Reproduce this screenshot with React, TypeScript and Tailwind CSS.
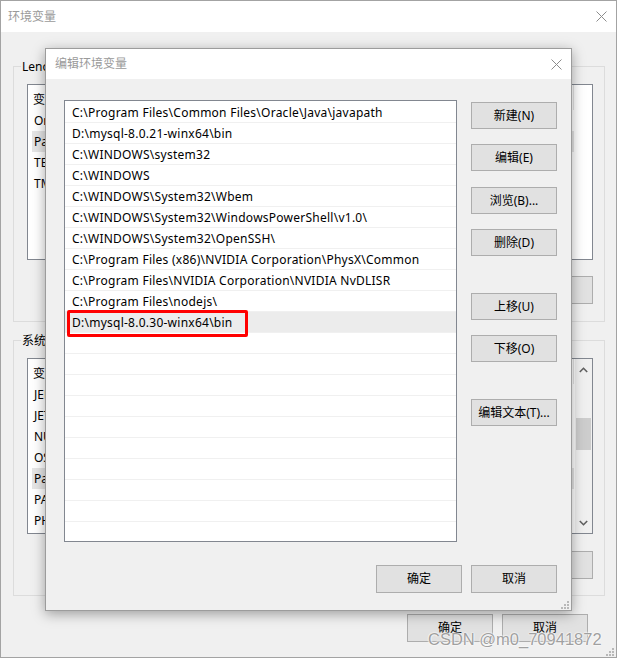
import React from "react";

const paths = [
  "C:\\Program Files\\Common Files\\Oracle\\Java\\javapath",
  "D:\\mysql-8.0.21-winx64\\bin",
  "C:\\WINDOWS\\system32",
  "C:\\WINDOWS",
  "C:\\WINDOWS\\System32\\Wbem",
  "C:\\WINDOWS\\System32\\WindowsPowerShell\\v1.0\\",
  "C:\\WINDOWS\\System32\\OpenSSH\\",
  "C:\\Program Files (x86)\\NVIDIA Corporation\\PhysX\\Common",
  "C:\\Program Files\\NVIDIA Corporation\\NVIDIA NvDLISR",
  "C:\\Program Files\\nodejs\\",
  "D:\\mysql-8.0.30-winx64\\bin",
];

const userVars = ["OneDrive", "Path", "TEMP", "TMP"];
const sysVars = ["JENKINS_HOME", "JETTY_HOME", "NUMBER_OF_PROCESSORS", "OS", "Path", "PATHEXT", "PHP_HOME"];

function CloseX() {
  return (
    <svg width="11" height="11" viewBox="0 0 11 11" className="block">
      <path d="M0.5 0.5 L10.5 10.5 M10.5 0.5 L0.5 10.5" stroke="#8c8c8c" strokeWidth="1" fill="none" />
    </svg>
  );
}

function Grip() {
  return (
    <svg width="8" height="8" viewBox="0 0 8 8" className="block">
      <rect x="6" y="0" width="2" height="2" fill="#b8b8b8" />
      <rect x="3" y="3" width="2" height="2" fill="#b8b8b8" />
      <rect x="6" y="3" width="2" height="2" fill="#b8b8b8" />
      <rect x="0" y="6" width="2" height="2" fill="#b8b8b8" />
      <rect x="3" y="6" width="2" height="2" fill="#b8b8b8" />
      <rect x="6" y="6" width="2" height="2" fill="#b8b8b8" />
    </svg>
  );
}

function Btn({ children, tall = false }: { children: React.ReactNode; tall?: boolean }) {
  return (
    <div
      className={
        "flex items-center justify-center w-[86px] bg-[#e1e1e1] border border-[#adadad] text-[12px] text-black shrink-0 " +
        (tall ? "h-[28px]" : "h-[27px]")
      }
    >
      {children}
    </div>
  );
}

function VarList({ rows, selected, scroll }: { rows: string[]; selected: number; scroll?: boolean }) {
  return (
    <div className="h-[176px] border border-[#828790] bg-white flex overflow-hidden">
      <div className="flex-1 flex flex-col">
        <div className="h-[25px] pt-[4px] flex items-center ml-[4px] w-[542px] border-r border-[#e5e5e5] shrink-0">
          <span className="w-[160px] pl-[1px]">变量</span>
        </div>
        {rows.map((k, i) => (
          <div
            key={k}
            className={
              "h-[21px] flex items-center ml-[4px] w-[542px] shrink-0 " + (i === selected ? "bg-[#e5e5e5]" : "")
            }
          >
            <span className="w-[160px] pl-[2px] whitespace-nowrap overflow-hidden">{k}</span>
          </div>
        ))}
      </div>
      {scroll && (
        <div className="w-[17px] bg-[#f0f0f0] flex flex-col items-center shrink-0">
          <div className="h-[17px] w-full flex items-center justify-center mt-[2px]">
            <svg width="9" height="6" viewBox="0 0 9 6">
              <path d="M0.8 5 L4.5 1.3 L8.2 5" stroke="#606060" strokeWidth="1.6" fill="none" />
            </svg>
          </div>
          <div className="mt-[40px] h-[32px] w-[15px] bg-[#cdcdcd]" />
          <div className="flex-1" />
          <div className="h-[17px] w-full flex items-center justify-center mb-[2px]">
            <svg width="9" height="6" viewBox="0 0 9 6">
              <path d="M0.8 1 L4.5 4.7 L8.2 1" stroke="#606060" strokeWidth="1.6" fill="none" />
            </svg>
          </div>
        </div>
      )}
    </div>
  );
}

export default function App() {
  const emptyRows = Array.from({ length: 21 - paths.length });
  return (
    <div className="relative w-[618px] h-[659px] bg-white overflow-hidden text-[12px] text-black font-['Noto_Sans','Noto_Sans_CJK_SC',sans-serif]">
      {/* Outer window: 环境变量 */}
      <div className="w-[617px] h-[658px] border border-[#a3a3a3] bg-[#f0f0f0] flex flex-col">
        <div className="h-[31px] bg-white flex items-center justify-between pl-[7px] pr-[9px] shrink-0">
          <span className="text-[#9a9a9a]">环境变量</span>
          <CloseX />
        </div>
        <div className="flex flex-col pl-[12px] pr-[11px]">
          <fieldset className="mt-[26px] border border-[#dcdcdc]">
            <legend className="ml-[7px] px-[1px] leading-[17px]">Lenovo 的用户变量(U)</legend>
            <div className="pl-[13px] pr-[11px] pt-[9px] pb-[17px] flex flex-col">
              <VarList rows={userVars} selected={1} />
              <div className="mt-[16px] flex justify-end gap-[9px]">
                <Btn tall>新建(N)...</Btn>
                <Btn tall>编辑(E)...</Btn>
                <Btn tall>删除(D)</Btn>
              </div>
            </div>
          </fieldset>
          <fieldset className="mt-[10px] border border-[#dcdcdc]">
            <legend className="ml-[7px] px-[1px] leading-[17px]">系统变量(S)</legend>
            <div className="pl-[13px] pr-[11px] pt-[9px] pb-[16px] flex flex-col">
              <VarList rows={sysVars} selected={4} scroll />
              <div className="mt-[17px] flex justify-end gap-[9px]">
                <Btn tall>新建(W)...</Btn>
                <Btn tall>编辑(I)...</Btn>
                <Btn tall>删除(L)</Btn>
              </div>
            </div>
          </fieldset>
          <div className="mt-[18px] flex justify-end gap-[9px] pr-[17px]">
            <Btn tall>确定</Btn>
            <Btn tall>取消</Btn>
          </div>
          <div className="mt-[6px] flex justify-end mr-[-9px]">
            <Grip />
          </div>
        </div>
      </div>

      {/* Dialog: 编辑环境变量 */}
      <div className="absolute left-[45px] top-[48px] w-[527px] h-[563px] border border-[#9c9c9c] bg-[#f0f0f0] shadow-[0_3px_12px_rgba(0,0,0,0.35)] flex flex-col overflow-hidden">
        <div className="h-[30px] bg-white flex items-center justify-between pl-[9px] pr-[9px] shrink-0">
          <span className="text-[#9a9a9a]">编辑环境变量</span>
          <CloseX />
        </div>
        <div className="flex pl-[18px] pt-[21px]">
          <div className="relative w-[393px] h-[442px] border border-[#828790] bg-white pt-[1px] overflow-hidden shrink-0">
            {paths.map((p, i) => (
              <div
                key={p}
                className={
                  "h-[21px] flex items-center pl-[7px] pt-[1px] border-b border-[#f0f0f0] whitespace-nowrap tracking-[0.25px] " +
                  (i === paths.length - 1 ? "bg-[#ececec]" : "")
                }
              >
                {p}
              </div>
            ))}
            {emptyRows.map((_, i) => (
              <div key={"e" + i} className="h-[21px] border-b border-[#f0f0f0]" />
            ))}
            <div className="absolute left-[2px] top-[209px] w-[181px] h-[27px] border-[3px] border-[#ff0000] rounded-[2px]" />
          </div>
          <div className="ml-[14px] flex flex-col pt-[2px]">
            <Btn>新建(N)</Btn>
            <div className="mt-[15px]"><Btn>编辑(E)</Btn></div>
            <div className="mt-[16px]"><Btn>浏览(B)...</Btn></div>
            <div className="mt-[15px]"><Btn>删除(D)</Btn></div>
            <div className="mt-[37px]"><Btn>上移(U)</Btn></div>
            <div className="mt-[15px]"><Btn>下移(O)</Btn></div>
            <div className="mt-[37px]"><Btn>编辑文本(T)...</Btn></div>
          </div>
        </div>
        <div className="mt-[23px] flex justify-end gap-[9px] pr-[14px]">
          <Btn tall>确定</Btn>
          <Btn tall>取消</Btn>
        </div>
        <div className="mt-[8px] flex justify-end pr-[2px]">
          <Grip />
        </div>
      </div>

      {/* Watermark */}
      <div className="absolute left-[428px] top-[631px] text-[16.5px] leading-none text-[#a0a0a0] font-['Liberation_Sans',Arial,sans-serif] [text-shadow:0_0_1px_#fff,0_0_2px_#fff,0_0_2px_#fff] whitespace-nowrap">
        CSDN @m0_70941872
      </div>
    </div>
  );
}
